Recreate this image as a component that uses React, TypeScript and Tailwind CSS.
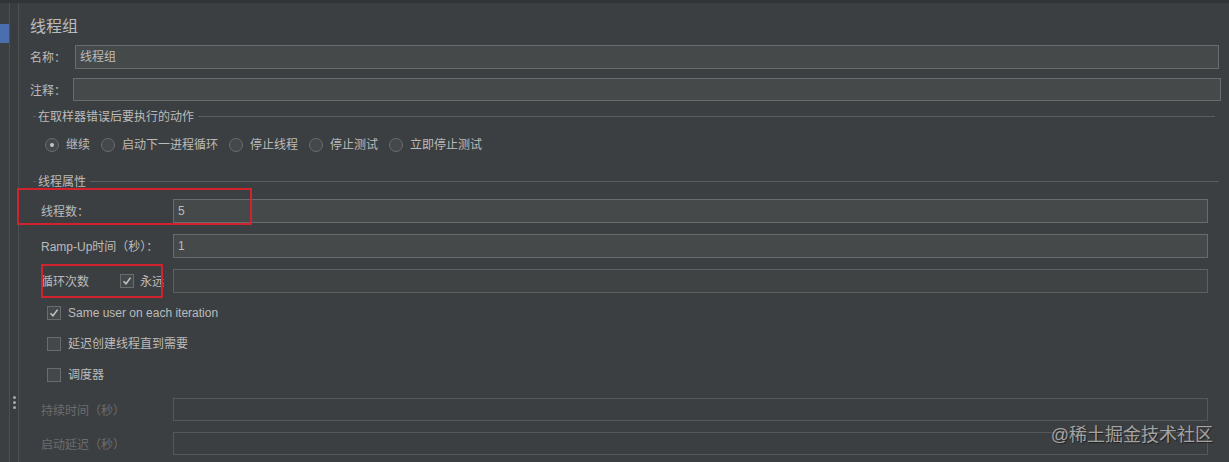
const font = "font-['Liberation_Sans','Noto_Sans_CJK_SC',sans-serif]";

function Radio({ label, checked }: { label: string; checked?: boolean }) {
  return (
    <div className="flex items-center gap-[7px]">
      <span className="w-[14px] h-[14px] rounded-full border border-[#6b6b6b] bg-[#43494a] flex items-center justify-center">
        {checked && <span className="w-[4px] h-[4px] rounded-full bg-[#c4c4c4]" />}
      </span>
      <span className="text-[12px] leading-[16px] text-[#bbbbbb]">{label}</span>
    </div>
  );
}

function Checkbox({ checked }: { checked?: boolean }) {
  return (
    <span className="w-[14px] h-[14px] shrink-0 border border-[#6b6b6b] bg-[#43494a] flex items-center justify-center">
      {checked && (
        <svg width="10" height="10" viewBox="0 0 10 10">
          <path d="M1.5 5.2 L4 7.8 L8.6 1.6" fill="none" stroke="#c4c4c4" strokeWidth="1.5" />
        </svg>
      )}
    </span>
  );
}

function GroupTitle({ label }: { label: string }) {
  return (
    <div className="flex items-center ml-[3px] mr-[4px] h-[16px]">
      <span className="w-[3px] h-px bg-[#5b5e60]" />
      <span className="ml-[2px] mr-[4px] pt-[1px] text-[12px] leading-[16px] text-[#bbbbbb]">{label}</span>
      <span className="flex-1 h-px bg-[#5b5e60]" />
    </div>
  );
}

function Field({ label, value, disabled }: { label: string; value?: string; disabled?: boolean }) {
  return (
    <div className="flex items-center pl-[11px] pr-[11px]">
      <span className={`w-[132px] pt-[2px] text-[12px] leading-[16px] ${disabled ? "text-[#6c6c6c]" : "text-[#bbbbbb]"}`}>{label}</span>
      <div
        className={`flex-1 border flex items-center pl-[4px] text-[12px] text-[#bbbbbb] ${
          disabled ? "border-[#555758] bg-[#3c3f41] h-[23px]" : "border-[#696b6c] bg-[#45494a] h-[24px]"
        }`}
      >
        {value}
      </div>
    </div>
  );
}

export default function App() {
  return (
    <div className={`relative w-[1229px] h-[462px] overflow-hidden bg-[#3c3f41] border-t-[3px] border-[#313335] flex ${font}`}>
      <div className="w-[10px] border-r border-[#4d5052]">
        <div className="mt-[21px] h-[19px] bg-[#4b6eaf]" />
      </div>
      <div className="w-[9px] border-r border-[#4d5052] bg-[#3a3d3f] flex flex-col items-center">
        <div className="mt-[393px] flex flex-col gap-[2px]">
          <span className="w-[3px] h-[3px] rounded-full bg-[#a8a8a8]" />
          <span className="w-[3px] h-[3px] rounded-full bg-[#a8a8a8]" />
          <span className="w-[3px] h-[3px] rounded-full bg-[#a8a8a8]" />
        </div>
      </div>

      <main className="flex-1 pl-[11px] pr-[10px] flex flex-col">
        <h1 className="mt-[14px] h-[19px] text-[16px] leading-[20px] text-[#bbbbbb] font-normal">线程组</h1>

        <div className="mt-[9px] flex items-center">
          <span className="w-[45px] pt-[2px] text-[12px] text-[#bbbbbb]">名称：</span>
          <div className="flex-1 h-[24px] border border-[#696b6c] bg-[#45494a] flex items-center pl-[4px] text-[12px] text-[#bbbbbb]">
            线程组
          </div>
        </div>

        <div className="mt-[9px] flex items-center mr-[-2px]">
          <span className="w-[43px] pt-[2px] text-[12px] text-[#bbbbbb]">注释：</span>
          <div className="flex-1 h-[23px] border border-[#696b6c] bg-[#45494a]" />
        </div>

        <div className="mt-[7px]">
          <GroupTitle label="在取样器错误后要执行的动作" />
        </div>

        <div className="mt-[13px] ml-[15px] flex items-center gap-[11px]">
          <Radio label="继续" checked />
          <Radio label="启动下一进程循环" />
          <Radio label="停止线程" />
          <Radio label="停止测试" />
          <Radio label="立即停止测试" />
        </div>

        <div className="mt-[20px] mr-[-4px]">
          <GroupTitle label="线程属性" />
        </div>

        <div className="mt-[10px] flex flex-col gap-[11px]">
          <Field label="线程数：" value="5" />
          <Field label="Ramp-Up时间（秒）：" value="1" />
          <div className="flex items-center pl-[11px] pr-[11px]">
            <div className="w-[132px] flex items-center">
              <span className="w-[79px] pt-[2px] text-[12px] leading-[16px] text-[#bbbbbb]">循环次数</span>
              <Checkbox checked />
              <span className="ml-[6px] pt-[2px] text-[12px] leading-[16px] text-[#bbbbbb]">永远</span>
            </div>
            <div className="flex-1 h-[24px] border border-[#5d6061] bg-[#404344]" />
          </div>
        </div>

        <div className="mt-[13px] pl-[17px] flex flex-col gap-[17px]">
          <div className="flex items-center gap-[7px] h-[14px]">
            <Checkbox checked />
            <span className="text-[12px] leading-[16px] text-[#bbbbbb]">Same user on each iteration</span>
          </div>
          <div className="flex items-center gap-[7px] h-[14px]">
            <Checkbox />
            <span className="text-[12px] leading-[16px] text-[#bbbbbb]">延迟创建线程直到需要</span>
          </div>
          <div className="flex items-center gap-[7px] h-[14px]">
            <Checkbox />
            <span className="text-[12px] leading-[16px] text-[#bbbbbb]">调度器</span>
          </div>
        </div>

        <div className="mt-[16px] flex flex-col gap-[11px]">
          <Field label="持续时间（秒）" disabled />
          <Field label="启动延迟（秒）" disabled />
        </div>
      </main>

      <div className="absolute left-[17px] top-[185px] w-[235px] h-[37px] border-2 border-[#d2222d]" />
      <div className="absolute left-[41px] top-[261px] w-[122px] h-[34px] border-2 border-[#d2222d]" />

      <div className="absolute right-[16px] top-[421px] text-[18px] leading-[22px] text-[#a3a3a3] [text-shadow:1px_1px_1px_rgba(0,0,0,0.5)]">
        @稀土掘金技术社区
      </div>
    </div>
  );
}
